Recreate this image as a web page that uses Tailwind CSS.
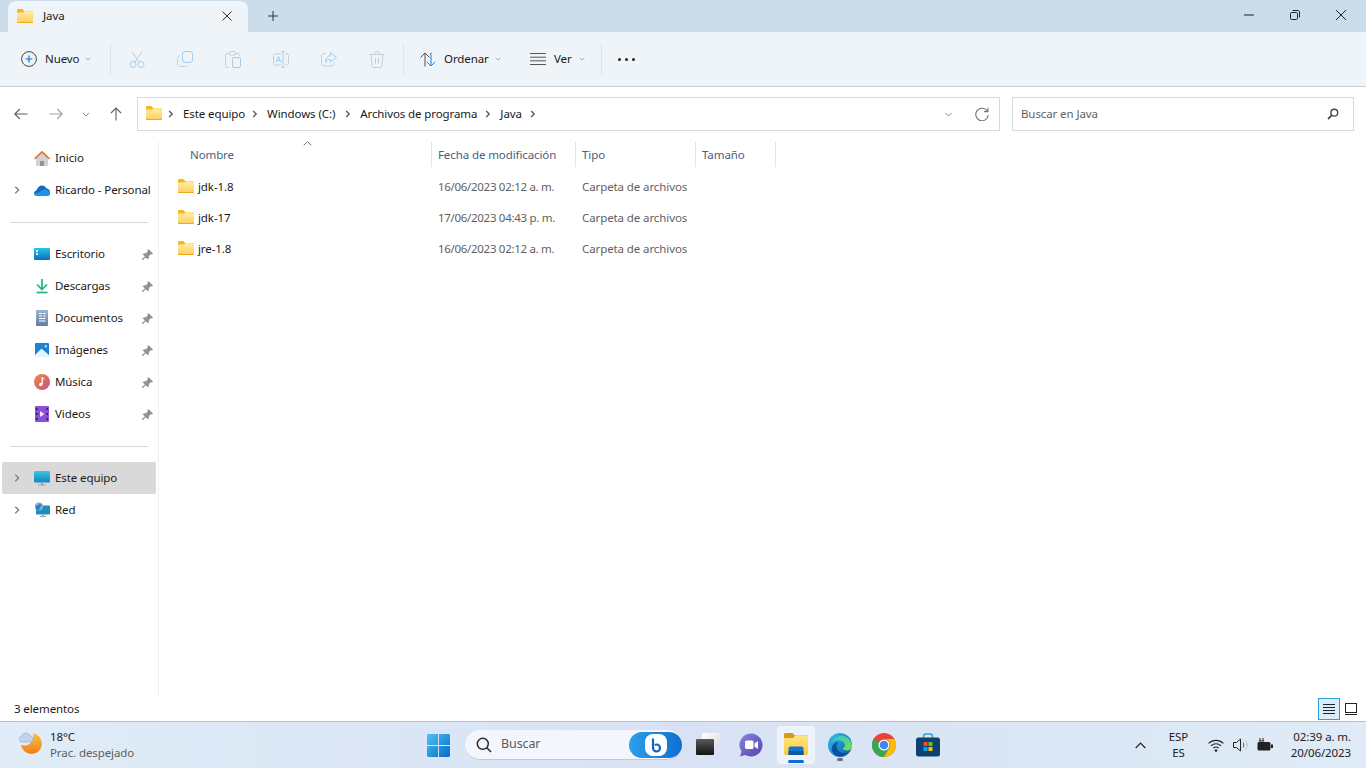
<!DOCTYPE html>
<html lang="es">
<head>
    <meta charset="UTF-8">
    <script src="https://cdn.jsdelivr.net/npm/@tailwindcss/browser@4"></script>
    <title>Java - Explorador de archivos</title>
</head>
<body class="w-[1366px] h-[768px] overflow-hidden bg-white font-['Noto_Sans',sans-serif] text-[11.5px] tracking-[-0.1px] text-[#1a1a1a]">

<svg class="absolute w-0 h-0" width="0" height="0">
    <defs>
        <linearGradient id="folderBody" x1="0" y1="0" x2="0" y2="1">
            <stop offset="0" stop-color="#ffedaa"/><stop offset="1" stop-color="#fdcf5c"/>
        </linearGradient>
        <symbol id="folder" viewBox="0 0 16 14">
            <path d="M0 1.200C0 .5.500 0 1.200 0h4l2 2H16v2H0z" fill="#f6b71c"/>
            <path d="M0 3.400h6l1.600-1.200H15c.6 0 1 .4 1 1V13c0 .6-.4 1-1 1H1c-.6 0-1-.4-1-1z" fill="url(#folderBody)"/>
            <path d="M0 13h16c0 .6-.4 1-1 1H1c-.6 0-1-.4-1-1z" fill="#eeaa1c"/>
        </symbol>
        <symbol id="pin" viewBox="0 0 12 12">
            <path d="M7 0 12 5 10.500 6 9.500 5.700 7.500 8 7.500 10 6 11 1 6 2 4.500 4.300 4.500 6.300 2.500 6 1.500zM3.500 7.500 4.500 8.500 1 12 0 12 0 11z" fill="#8c9298"/>
        </symbol>
        <symbol id="chev" viewBox="0 0 8 8">
            <path d="M2.300.8 5.600 4 2.300 7.200" fill="none" stroke="#7d7d7d" stroke-width="1.300"/>
        </symbol>
        <symbol id="down" viewBox="0 0 8 5">
            <path d="M.8.8 4 4 7.200.8" fill="none" stroke="#8a8f94" stroke-width="1"/>
        </symbol>
        <symbol id="bread" viewBox="0 0 6 8">
            <path d="M1.200 1 4.200 4 1.200 7" fill="none" stroke="#555" stroke-width="1.300"/>
        </symbol>
    </defs>
</svg>

<div class="flex flex-col h-[768px]">

    <!-- title bar with tab -->
    <div class="h-[32px] bg-[#cbdcea] flex items-end shrink-0">
        <div class="ml-[8px] w-[240px] h-[31px] bg-[#eff4f9] rounded-t-[8px] flex items-center pl-[9px] pb-[1px]">
            <svg class="w-[16px] h-[14px]"><use href="#folder"/></svg>
            <span class="ml-[10px] text-[#1a1a1a]">Java</span>
            <svg class="ml-auto mr-[16px]" width="10" height="10" viewBox="0 0 10 10"><path d="M.5.5l9 9M9.500.5l-9 9" stroke="#333" stroke-width="1" fill="none"/></svg>
        </div>
        <div class="ml-[20px] h-[32px] flex items-center">
            <svg width="10" height="10" viewBox="0 0 10 10"><path d="M5 0v10M0 5h10" stroke="#333" stroke-width="1" fill="none"/></svg>
        </div>
        <div class="ml-auto h-[32px] flex items-center pb-[3px] pr-[20px] gap-[36px]">
            <svg width="10" height="10" viewBox="0 0 10 10"><path d="M0 5h11" stroke="#222" stroke-width="1" fill="none"/></svg>
            <svg width="10" height="10" viewBox="0 0 10 10"><rect x=".5" y="2.500" width="7" height="7" rx="1.200" fill="none" stroke="#222"/><path d="M2.500.5h5.500c.9 0 1.500.6 1.500 1.500v5.500" fill="none" stroke="#222"/></svg>
            <svg width="10" height="10" viewBox="0 0 10 10"><path d="M0 0l10 10M10 0L0 10" stroke="#222" stroke-width="1" fill="none"/></svg>
        </div>
    </div>

    <!-- command bar -->
    <div class="h-[55px] bg-[#eff4f9] border-b border-[#c3d0db] flex items-center shrink-0">
        <div class="w-[110px] flex items-center pl-[21px]">
            <svg width="16" height="16" viewBox="0 0 16 16"><circle cx="8" cy="8" r="7.400" fill="none" stroke="#4a4a4a"/><path d="M8 4.500v7M4.500 8h7" stroke="#0a78d4" stroke-width="1.200"/></svg>
            <span class="ml-[8px]">Nuevo</span>
            <svg class="ml-[6px]" width="6" height="4"><use href="#down"/></svg>
        </div>
        <div class="w-px h-[32px] bg-[#dfe4e8]"></div>
        <div class="flex ml-[2px]">
            <div class="w-[48px] flex justify-center">
                <svg width="16" height="17" viewBox="0 0 16 17"><path d="M3 .5l7 10.500M13 .5l-7 10.500" stroke="#c6cfd7" fill="none"/><circle cx="4" cy="13.500" r="3" fill="none" stroke="#a5cdee"/><circle cx="12" cy="13.500" r="3" fill="none" stroke="#a5cdee"/></svg>
            </div>
            <div class="w-[48px] flex justify-center">
                <svg width="16" height="16" viewBox="0 0 16 16"><rect x="5.500" y=".5" width="10" height="11" rx="2.500" fill="none" stroke="#a5cdee"/><path d="M3 4.500C1.500 5 .5 6 .5 7.500v5c0 1.800 1.200 3 3 3h5c1.200 0 2-.6 2.500-1.500" fill="none" stroke="#c6cfd7"/></svg>
            </div>
            <div class="w-[48px] flex justify-center">
                <svg width="16" height="17" viewBox="0 0 16 17"><path d="M4 2.500H2C1 2.500.5 3 .5 4v11c0 1 .5 1.500 1.500 1.500h2M11 2.500h2c1 0 1.500.5 1.500 1.500v1" fill="none" stroke="#c6cfd7"/><rect x="4.500" y=".5" width="6" height="3.500" rx="1" fill="none" stroke="#c6cfd7"/><rect x="7.500" y="6.500" width="8" height="10" rx="1.500" fill="none" stroke="#a5cdee"/></svg>
            </div>
            <div class="w-[48px] flex justify-center">
                <svg width="16" height="17" viewBox="0 0 16 17"><path d="M8 3H2C1 3 .5 3.500.5 4.500v8c0 1 .5 1.500 1.500 1.500h6M12 3h2c1 0 1.500.5 1.500 1.500v8c0 1-.5 1.500-1.500 1.500h-2" fill="none" stroke="#c6cfd7"/><path d="M8.500 .5h3M10 .5v16M8.500 16.500h3" fill="none" stroke="#a5cdee"/><path d="M3 11.500l2.500-6 2.500 6M4 9.500h3" fill="none" stroke="#a5cdee"/></svg>
            </div>
            <div class="w-[48px] flex justify-center">
                <svg width="16" height="16" viewBox="0 0 16 16"><path d="M5 2.500H3C1.500 2.500.5 3.500.5 5v7.500C.5 14 1.500 15 3 15h7.500c1.500 0 2.500-1 2.500-2.500V11" fill="none" stroke="#c6cfd7"/><path d="M9.500 1.500L15.500 6.500 9.500 11V8.500C7 8.500 5.500 9.500 4.500 11.500 4.500 7.500 6.500 5 9.500 4.500z" fill="none" stroke="#a5cdee"/></svg>
            </div>
            <div class="w-[48px] flex justify-center">
                <svg width="16" height="17" viewBox="0 0 16 17"><path d="M.5 3.500h15M5.500 3.500C5.500 1.500 6.500.5 8 .5s2.500 1 2.500 3M2 3.500l1 11c.1 1.200.8 2 2 2h6c1.200 0 1.900-.8 2-2l1-11M6.500 7v6M9.500 7v6" fill="none" stroke="#c6cfd7"/></svg>
            </div>
        </div>
        <div class="ml-[2px] w-px h-[32px] bg-[#dfe4e8]"></div>
        <div class="w-[126px] flex items-center pl-[16px]">
            <svg width="16" height="15" viewBox="0 0 16 15"><path d="M5 14.500V1M.5 5.500 5 1l4.500 4.500" fill="none" stroke="#555"/><path d="M11 .5V14M6.800 9.800 11 14l4.200-4.200" fill="none" stroke="#1f7fd0"/></svg>
            <span class="ml-[8px]">Ordenar</span>
            <svg class="ml-[6px]" width="6" height="4"><use href="#down"/></svg>
        </div>
        <div class="w-[71px] flex items-center">
            <svg width="16" height="12" viewBox="0 0 16 12"><path d="M0 .5h16M0 4.200h16M0 7.800h16M0 11.500h16" stroke="#555"/></svg>
            <span class="ml-[8px]">Ver</span>
            <svg class="ml-[7px]" width="6" height="4"><use href="#down"/></svg>
        </div>
        <div class="w-px h-[32px] bg-[#dfe4e8]"></div>
        <div class="ml-[16px] flex gap-[4px]">
            <div class="w-[3px] h-[3px] rounded-full bg-[#222]"></div>
            <div class="w-[3px] h-[3px] rounded-full bg-[#222]"></div>
            <div class="w-[3px] h-[3px] rounded-full bg-[#222]"></div>
        </div>
    </div>

    <!-- address row -->
    <div class="h-[55px] flex items-start pt-[10px] shrink-0">
        <div class="w-[137px] h-[34px] flex items-center">
            <svg class="ml-[14px]" width="14" height="12" viewBox="0 0 14 12"><path d="M13.500 6H1M5.800 1 .8 6l5 5" fill="none" stroke="#5e5e5e" stroke-width="1.100"/></svg>
            <svg class="ml-[21px]" width="14" height="12" viewBox="0 0 14 12"><path d="M.5 6H13M8.200 1l5 5-5 5" fill="none" stroke="#a0a0a0" stroke-width="1.100"/></svg>
            <svg class="ml-[19px]" width="8" height="5"><use href="#down"/></svg>
            <svg class="ml-[20px]" width="12" height="14" viewBox="0 0 12 14"><path d="M6 13.500V1M1 6l5-5 5 5" fill="none" stroke="#5e5e5e" stroke-width="1.100"/></svg>
        </div>
        <div class="w-[863px] h-[34px] border border-[#d9d9d9] flex items-center pl-[8px] text-[#1a1a1a]">
            <svg class="w-[16px] h-[14px] mb-[2px]"><use href="#folder"/></svg>
            <svg class="ml-[6px]" width="6" height="8"><use href="#bread"/></svg>
            <span class="ml-[9px]">Este equipo</span>
            <svg class="ml-[7px]" width="6" height="8"><use href="#bread"/></svg>
            <span class="ml-[9px]">Windows (C:)</span>
            <svg class="ml-[10px]" width="6" height="8"><use href="#bread"/></svg>
            <span class="ml-[9px]">Archivos de programa</span>
            <svg class="ml-[8px]" width="6" height="8"><use href="#bread"/></svg>
            <span class="ml-[9px]">Java</span>
            <svg class="ml-[8px]" width="6" height="8"><use href="#bread"/></svg>
            <svg class="ml-auto" width="9" height="5"><use href="#down"/></svg>
            <svg class="ml-[22px] mr-[10px]" width="14" height="14" viewBox="0 0 13 13"><path d="M11.500 4A5.800 5.800 0 1 0 12.300 7.500M12 .8V4.300H8.500" fill="none" stroke="#6f6f6f"/></svg>
        </div>
        <div class="ml-[12px] w-[342px] h-[34px] border border-[#d9d9d9] flex items-center pl-[8px] text-[#5f5f5f]">
            <span>Buscar en Java</span>
            <svg class="ml-auto mr-[14px]" width="12" height="12" viewBox="0 0 12 12"><circle cx="7.300" cy="4.700" r="3.400" fill="none" stroke="#4a4a4a" stroke-width="1.400"/><path d="M4.800 7.200 1 11" stroke="#4a4a4a" stroke-width="1.800"/></svg>
        </div>
    </div>

    <!-- main area -->
    <div class="h-[555px] flex shrink-0">
        <!-- sidebar -->
        <div class="w-[159px] border-r border-[#f0f0f0] shrink-0">
            <div class="h-[32px] flex items-center pl-[34px]">
                <svg width="16" height="15" viewBox="0 0 16 15"><path d="M2 7v7c0 .6.400 1 1 1h10c.6 0 1-.4 1-1V7L8 1.500z" fill="#cfd3d6"/><path d="M6 15V10h4v5z" fill="#8e9499"/><path d="M.5 7.800 8 .8l7.500 7" fill="none" stroke="#e2762a" stroke-width="1.600"/></svg>
                <span class="ml-[5px]">Inicio</span>
            </div>
            <div class="h-[32px] flex items-center pl-[13px]">
                <svg width="8" height="8"><use href="#chev"/></svg>
                <svg class="ml-[13px]" width="16" height="11" viewBox="0 0 16 11"><path d="M3.500 11C1.500 11 0 9.800 0 8.300 0 6.900 1 5.800 2.500 5.600 3.300 2.500 5.500.5 8 .5c2 0 3.700 1.200 4.500 3 2 .1 3.500 1.800 3.500 3.800 0 2-1 3.700-3 3.700z" fill="#0f6cbd"/><path d="M3.500 11C1.500 11 0 9.800 0 8.300c3 0 5-.6 8-3 2-1.500 4.500-1 5.500.2C15.500 6.300 16 7.500 16 8.500 16 10 14.800 11 13 11z" fill="#1f93e5"/></svg>
                <span class="ml-[5px]">Ricardo - Personal</span>
            </div>
            <div class="h-[32px] flex items-center pl-[10px]"><div class="w-[138px] h-px bg-[#d9d9d9]"></div></div>

            <div class="h-[32px] flex items-center pl-[34px]">
                <svg width="16" height="12" viewBox="0 0 16 12"><defs><linearGradient id="deskG" x1="0" y1="0" x2="0" y2="1"><stop offset="0" stop-color="#29c1e6"/><stop offset="1" stop-color="#0d6fb8"/></linearGradient></defs><rect width="16" height="12" rx="1" fill="url(#deskG)"/><rect x="2" y="2" width="2" height="2" fill="#dff3fb"/><rect x="2" y="5" width="2" height="2" fill="#dff3fb"/></svg>
                <span class="ml-[5px]">Escritorio</span>
                <svg class="ml-auto mr-[5px]" width="11" height="11"><use href="#pin"/></svg>
            </div>
            <div class="h-[32px] flex items-center pl-[34px]">
                <svg width="16" height="16" viewBox="0 0 16 16"><path d="M8 1v10M3 6.500l5 5 5-5" fill="none" stroke="#1fb38f" stroke-width="1.700"/><path d="M2.500 14.500h11" stroke="#1fb38f" stroke-width="1.700"/></svg>
                <span class="ml-[5px]">Descargas</span>
                <svg class="ml-auto mr-[5px]" width="11" height="11"><use href="#pin"/></svg>
            </div>
            <div class="h-[32px] flex items-center pl-[36px]">
                <svg width="12" height="16" viewBox="0 0 12 16"><defs><linearGradient id="docG" x1="0" y1="0" x2="0" y2="1"><stop offset="0" stop-color="#9db6cf"/><stop offset="1" stop-color="#5f7f9f"/></linearGradient></defs><rect width="12" height="16" rx="1" fill="url(#docG)"/><path d="M3 3.500h3M3 6h3M3 8.500h6.500M3 11h6.500M7 3.500h2.500M7 6h2.500" stroke="#fff"/></svg>
                <span class="ml-[7px]">Documentos</span>
                <svg class="ml-auto mr-[5px]" width="11" height="11"><use href="#pin"/></svg>
            </div>
            <div class="h-[32px] flex items-center pl-[35px]">
                <svg width="14" height="14" viewBox="0 0 14 14"><rect width="14" height="14" rx="1" fill="#1b84d6"/><path d="M0 12 5.500 6.500c.7-.6 1.300-.6 2 0L14 12v1c0 .6-.4 1-1 1H1c-.6 0-1-.4-1-1z" fill="#e8f4fc"/><circle cx="10.800" cy="3.300" r="1.100" fill="#e8f4fc"/></svg>
                <span class="ml-[6px]">Imágenes</span>
                <svg class="ml-auto mr-[5px]" width="11" height="11"><use href="#pin"/></svg>
            </div>
            <div class="h-[32px] flex items-center pl-[34px]">
                <svg width="16" height="16" viewBox="0 0 16 16"><defs><linearGradient id="musG" x1="0" y1="0" x2="1" y2="1"><stop offset="0" stop-color="#ef8a4a"/><stop offset="1" stop-color="#c84f7d"/></linearGradient></defs><circle cx="8" cy="8" r="8" fill="url(#musG)"/><path d="M8.200 3.500v6.500" stroke="#fff" stroke-width="1.300"/><circle cx="6.800" cy="10.500" r="1.700" fill="#fff"/><path d="M8.200 3.500c1 .2 1.800.7 2 1.800" fill="none" stroke="#fff"/></svg>
                <span class="ml-[5px]">Música</span>
                <svg class="ml-auto mr-[5px]" width="11" height="11"><use href="#pin"/></svg>
            </div>
            <div class="h-[32px] flex items-center pl-[35px]">
                <svg width="14" height="16" viewBox="0 0 14 16"><rect width="14" height="16" rx="1" fill="#8a4fd8"/><path d="M5 5v6l4.500-3z" fill="#f0e6fc"/><path d="M1 2h1.500v2H1zM1 7h1.500v2H1zM1 12h1.500v2H1zM11.500 2H13v2h-1.500zM11.500 7H13v2h-1.500zM11.500 12H13v2h-1.500z" fill="#2f1a57"/></svg>
                <span class="ml-[6px]">Videos</span>
                <svg class="ml-auto mr-[5px]" width="11" height="11"><use href="#pin"/></svg>
            </div>
            <div class="h-[32px] flex items-center pl-[10px]"><div class="w-[138px] h-px bg-[#d9d9d9]"></div></div>

            <div class="ml-[2px] w-[154px] h-[32px] flex items-center pl-[11px] bg-[#d9d9d9] rounded-[2px]">
                <svg width="8" height="8"><use href="#chev"/></svg>
                <svg class="ml-[13px]" width="16" height="15" viewBox="0 0 16 15"><defs><linearGradient id="pcG" x1="0" y1="0" x2="0" y2="1"><stop offset="0" stop-color="#3ec6dc"/><stop offset="1" stop-color="#0f87bd"/></linearGradient></defs><rect width="16" height="11.500" rx="1" fill="url(#pcG)"/><path d="M7 11.500h2v2H7zM4 13.500h8v1H4z" fill="#9aa3a9"/></svg>
                <span class="ml-[5px]">Este equipo</span>
            </div>
            <div class="h-[32px] flex items-center pl-[13px]">
                <svg width="8" height="8"><use href="#chev"/></svg>
                <svg class="ml-[13px]" width="16" height="16" viewBox="0 0 16 16"><rect x="2" y="3.500" width="14" height="9" rx="1" fill="#1990bd"/><path d="M8 12.500h2v1.500H8zM6 14h6v1H6z" fill="#9aa3a9"/><circle cx="5" cy="4.500" r="4" fill="#7fb5e0"/><path d="M2 3c1.500 1 3 .5 3-1.500 1.500 0 2.800 1 3 2.500-1.500-.3-2 .7-1.500 2L4 8.500C2 8 1 6 2 3z" fill="#3b7dc4"/></svg>
                <span class="ml-[5px]">Red</span>
            </div>
        </div>

        <!-- file list -->
        <div class="flex-1 pl-[19px] relative">
            <svg class="absolute left-[144px] top-[-1px]" width="9" height="5" viewBox="0 0 9 5"><path d="M.7 4.300 4.500.7l3.800 3.600" fill="none" stroke="#6f6f6f"/></svg>
            <div class="h-[25px] flex text-[#4c607a]">
                <div class="w-[254px] border-r border-[#e5e5e5] pl-[12px] flex items-center">Nombre</div>
                <div class="w-[144px] border-r border-[#e5e5e5] pl-[6px] flex items-center">Fecha de modificación</div>
                <div class="w-[120px] border-r border-[#e5e5e5] pl-[6px] flex items-center">Tipo</div>
                <div class="w-[80px] border-r border-[#e5e5e5] pl-[6px] flex items-center">Tamaño</div>
            </div>
            <div class="mt-[4px] h-[31px] flex items-center">
                <div class="w-[254px] flex items-center"><svg class="w-[16px] h-[14px] mb-[2px]"><use href="#folder"/></svg><span class="ml-[4px]">jdk-1.8</span></div>
                <div class="w-[144px] pl-[6px] text-[#5f5f5f] tracking-[-0.3px]">16/06/2023 02:12 a. m.</div>
                <div class="w-[120px] pl-[6px] text-[#5f5f5f]">Carpeta de archivos</div>
            </div>
            <div class="h-[31px] flex items-center">
                <div class="w-[254px] flex items-center"><svg class="w-[16px] h-[14px] mb-[2px]"><use href="#folder"/></svg><span class="ml-[4px]">jdk-17</span></div>
                <div class="w-[144px] pl-[6px] text-[#5f5f5f] tracking-[-0.3px]">17/06/2023 04:43 p. m.</div>
                <div class="w-[120px] pl-[6px] text-[#5f5f5f]">Carpeta de archivos</div>
            </div>
            <div class="h-[31px] flex items-center">
                <div class="w-[254px] flex items-center"><svg class="w-[16px] h-[14px] mb-[2px]"><use href="#folder"/></svg><span class="ml-[4px]">jre-1.8</span></div>
                <div class="w-[144px] pl-[6px] text-[#5f5f5f] tracking-[-0.3px]">16/06/2023 02:12 a. m.</div>
                <div class="w-[120px] pl-[6px] text-[#5f5f5f]">Carpeta de archivos</div>
            </div>
        </div>
    </div>

    <!-- status bar -->
    <div class="h-[24px] flex items-center pl-[14px] shrink-0">
        <span>3 elementos</span>
        <div class="ml-auto flex items-center pr-[5px]">
            <div class="w-[22px] h-[22px] border border-[#2aa0dc] bg-[#d9ecf7] flex items-center justify-center">
                <svg width="12" height="11" viewBox="0 0 12 11"><path d="M0 .5h12M0 3.500h12M0 6.500h12M0 9.500h12" stroke="#222"/></svg>
            </div>
            <div class="w-[21px] h-[22px] flex items-center justify-center">
                <svg width="12" height="12" viewBox="0 0 12 12"><rect x=".5" y=".5" width="11" height="9" fill="none" stroke="#222"/><path d="M0 11.500h12" stroke="#222"/></svg>
            </div>
        </div>
    </div>

    <!-- taskbar -->
    <div class="h-[47px] border-t border-[#b9bfc6] bg-gradient-to-r from-[#e0ecf7] via-[#d8e2f4] to-[#dfebf6] flex items-center shrink-0">
        <svg class="ml-[19px] mb-[3px]" width="24" height="24" viewBox="0 0 24 24"><defs><linearGradient id="moonG" x1="0" y1="0" x2="0" y2="1"><stop offset="0" stop-color="#fbc23e"/><stop offset="1" stop-color="#ee7f1a"/></linearGradient></defs><path d="M14 1.200A10.500 10.500 0 1 1 2 12.500C8 16 16 10 14 1.200z" fill="url(#moonG)"/><path d="M3 10C1 10 0 8.800 0 7.300 0 5.800 1 4.800 2.400 4.600 3 2 5 1 7 1 9 1 10.500 2.200 11 4 12.800 4.200 14 5.500 14 7.200 14 8.800 13 10 11 10z" fill="#c3d3ec" stroke="#8fa8cf" stroke-width=".6"/></svg>
        <div class="ml-[7px] w-[377px] leading-[16px]">
            <div class="text-[#1a1a1a]">18°C</div>
            <div class="text-[#5f5f5f]">Prac. despejado</div>
        </div>

        <svg width="23" height="23" viewBox="0 0 24 24"><defs><linearGradient id="winG" x1="0" y1="0" x2="1" y2="1"><stop offset="0" stop-color="#4cc3f4"/><stop offset="1" stop-color="#0669c9"/></linearGradient></defs><path d="M0 1.500C0 .7.700 0 1.500 0h10v11.500H0zM12.500 0h10c.8 0 1.500.7 1.500 1.500v10H12.500zM0 12.500h11.500V24h-10C.7 24 0 23.300 0 22.500zM12.500 12.500H24v10c0 .8-.7 1.500-1.500 1.500h-10z" fill="url(#winG)"/></svg>

        <div class="ml-[15px] w-[217px] h-[30px] rounded-full bg-[#f3f6fd] border-b border-[#c3c9d3] flex items-center pl-[11px] relative">
            <svg width="16" height="16" viewBox="0 0 16 16"><circle cx="6.800" cy="6.800" r="5.500" fill="none" stroke="#2b2b2b" stroke-width="1.500"/><path d="M10.800 10.800 15 15" stroke="#2b2b2b" stroke-width="1.600"/></svg>
            <span class="ml-[9px] text-[#5a5a5a] text-[12.5px]">Buscar</span>
            <div class="ml-auto w-[53px] h-[26px] mt-[1px] rounded-full bg-gradient-to-r from-[#2f9fe8] to-[#0f6fd0] flex items-center justify-center">
                <div class="w-[22px] h-[22px] rounded-[8px] bg-white flex items-center justify-center">
                    <svg width="14" height="16" viewBox="0 0 14 16"><path d="M4 1.500v9.500a3.500 3.500 0 1 0 3.500-3.500c-.6 0-1.200.2-1.700.5" fill="none" stroke="#1560c4" stroke-width="2.200"/></svg>
                </div>
            </div>
        </div>

        <div class="ml-[14px] w-[24px] h-[24px] relative">
            <div class="absolute left-[6px] top-[0px] w-[18px] h-[15px] rounded-[1px] bg-gradient-to-br from-white to-[#dcdcdc]"></div>
            <div class="absolute left-[0px] top-[6px] w-[18px] h-[16px] rounded-[1px] bg-gradient-to-b from-[#5b5b5b] to-[#151515]"></div>
        </div>

        <svg class="ml-[19px]" width="24" height="24" viewBox="0 0 24 24"><defs><linearGradient id="teamsG" x1="0" y1="0" x2="1" y2="1"><stop offset="0" stop-color="#8489dc"/><stop offset="1" stop-color="#5a3fb0"/></linearGradient></defs><path d="M12 .5a11.500 11.500 0 1 1-5.500 21.600L1 23.500l1.500-5A11.500 11.500 0 0 1 12 .5z" fill="url(#teamsG)"/><rect x="6" y="7.500" width="8.500" height="8.500" rx="1.500" fill="#fff"/><path d="M15.500 10.500 19 8v8l-3.500-2.500z" fill="#fff"/></svg>

        <div class="ml-[14px] w-[38px] h-[38px] rounded-[4px] bg-[#eef3fb] flex flex-col items-center pt-[7px] relative">
            <svg width="24" height="22" viewBox="0 0 24 22"><defs><linearGradient id="fxG" x1="0" y1="0" x2="0" y2="1"><stop offset="0" stop-color="#ffe680"/><stop offset="1" stop-color="#fcc93e"/></linearGradient></defs><path d="M0 1.500C0 .7.700 0 1.500 0h7l2.500 2.500h13V5H0z" fill="#d99a16"/><path d="M0 5h9l2.500-2.500h11c.8 0 1.500.7 1.500 1.500v16.500c0 .8-.7 1.500-1.500 1.500h-21C.7 22 0 21.300 0 20.500z" fill="url(#fxG)"/><path d="M4.500 22v-6.500c0-1.200.8-2 2-2h11c1.200 0 2 .8 2 2V22z" fill="#0f76c9"/><path d="M4.500 18h15v4h-15z" fill="#0a5ba3"/></svg>
            <div class="absolute bottom-[1px] left-[11px] w-[16px] h-[3px] rounded-full bg-[#0a6fd0]"></div>
        </div>

        <div class="ml-[13px] w-[24px] h-[38px] relative flex items-start pt-[7px]">
            <svg width="24" height="24" viewBox="0 0 24 24"><defs><linearGradient id="edgeA" x1="0" y1="0" x2="1" y2="1"><stop offset="0" stop-color="#35c1f1"/><stop offset="1" stop-color="#0c59a4"/></linearGradient><linearGradient id="edgeB" x1="0" y1="0" x2="1" y2="1"><stop offset="0" stop-color="#2dc7d8"/><stop offset="1" stop-color="#78e04f"/></linearGradient></defs><circle cx="12" cy="12" r="12" fill="url(#edgeA)"/><path d="M4 9C6 3.500 12 1.500 17 3.500c4 1.800 7 5 7 9.500 0 3-2.500 4.500-5 4.500-2 0-4-.8-4.500-2 2.500-1 3-4 1.500-6C14 7 8 6 4 9z" fill="url(#edgeB)"/><path d="M9 11c-1.500 4 1.500 9 7 9 2 0 3.500-.5 5-1.500-2.500 4-8 6.500-13 4C4.500 21 3 17 4.500 13 5.500 10.500 8 9 10.500 9 9.800 9.500 9.300 10.200 9 11z" fill="#0b4f9e"/></svg>
            <div class="absolute bottom-[3px] left-[9px] w-[6px] h-[3px] rounded-full bg-[#6b7078]"></div>
        </div>

        <svg class="ml-[20px]" width="24" height="24" viewBox="0 0 24 24"><circle cx="12" cy="12" r="12" fill="#ea4335"/><path d="M12 12 1.600 6A12 12 0 0 0 12 24l5.200-9z" fill="#34a853"/><path d="M12 6h10.400A12 12 0 0 1 12 24l5.200-9A6 6 0 0 0 12 6z" fill="#fbbc05"/><circle cx="12" cy="12" r="5.500" fill="#fff"/><circle cx="12" cy="12" r="4.300" fill="#4285f4"/></svg>

        <svg class="ml-[20px]" width="24" height="24" viewBox="0 0 24 24"><path d="M7.500 5V3.500C7.500 2 8.500 1 10 1h4c1.500 0 2.500 1 2.500 2.500V5" fill="none" stroke="#2ea0dc" stroke-width="1.500"/><rect y="4.500" width="24" height="19" rx="2.500" fill="#10406f"/><rect x="7.500" y="9" width="4" height="4" fill="#f25022"/><rect x="12.500" y="9" width="4" height="4" fill="#7fba00"/><rect x="7.500" y="14" width="4" height="4" fill="#00a4ef"/><rect x="12.500" y="14" width="4" height="4" fill="#ffb900"/></svg>

        <svg class="ml-[195px]" width="11" height="7" viewBox="0 0 11 7"><path d="M.7 6 5.500 1.200 10.300 6" fill="none" stroke="#222" stroke-width="1.200"/></svg>
        <div class="ml-[16px] w-[33px] text-center leading-[16px] text-[#222]">
            <div>ESP</div>
            <div>ES</div>
        </div>
        <svg class="ml-[13px]" width="16" height="13" viewBox="0 0 16 13"><path d="M.6 4.400a10.500 10.500 0 0 1 14.800 0M3 6.800a7 7 0 0 1 10 0M5.300 9.100a3.700 3.700 0 0 1 5.400 0" fill="none" stroke="#222" stroke-width="1.100"/><circle cx="8" cy="11.500" r="1.300" fill="#222"/></svg>
        <svg class="ml-[9px]" width="16" height="14" viewBox="0 0 16 14"><path d="M.5 4.500h3L7.500 1v12L3.500 9.500h-3z" fill="none" stroke="#222"/><path d="M10 4.500c1 1.500 1 3.500 0 5" fill="none" stroke="#555"/><path d="M12.500 2.500c2 2.500 2 6.500 0 9" fill="none" stroke="#b5bcc4"/></svg>
        <svg class="ml-[8px]" width="16" height="14" viewBox="0 0 16 14"><rect x=".5" y="4" width="13" height="8.500" rx="1.500" fill="#222"/><rect x="14" y="6.500" width="2" height="3.500" fill="#222"/><path d="M3 0v3M6 0v3M1.800 3h5.400" stroke="#222" fill="none"/></svg>
        <div class="ml-[1px] w-[77px] text-right leading-[16px] text-[#222]">
            <div>02:39 a. m.</div>
            <div>20/06/2023</div>
        </div>
    </div>
</div>
</body>
</html>
